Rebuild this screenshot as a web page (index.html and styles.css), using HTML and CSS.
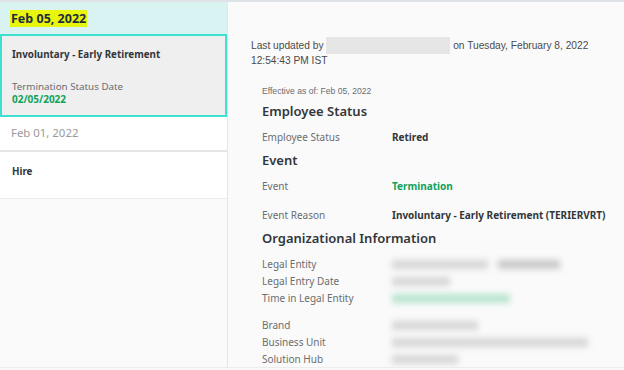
FILE: index.html
```html
<!DOCTYPE html>
<html lang="en">
<head>
<meta charset="UTF-8">
<title>Job History</title>
<link rel="stylesheet" href="styles.css">
</head>
<body>
<div class="page">
<div class="sidebar">
<div class="group-head"><span class="mark">Feb 05, 2022</span></div>
<div class="card selected">
<div class="card-title">Involuntary - Early Retirement</div>
<div class="card-label">Termination Status Date</div>
<div class="card-date">02/05/2022</div>
</div>
<div class="group-date">Feb 01, 2022</div>
<div class="card plain">
<div class="card-title">Hire</div>
</div>
</div>

<div class="main">
<p class="updated">Last updated by <span class="redact"></span> on Tuesday, February 8, 2022<br>12:54:43 PM IST</p>
<div class="details">
<p class="effective">Effective as of: Feb 05, 2022</p>

<h2>Employee Status</h2>
<div class="row"><span class="label">Employee Status</span><span class="value">Retired</span></div>

<h2 class="event-head">Event</h2>
<div class="row event-row"><span class="label">Event</span><span class="value green">Termination</span></div>
<div class="row reason-row"><span class="label">Event Reason</span><span class="value">Involuntary - Early Retirement (TERIERVRT)</span></div>

<h2 class="org-head">Organizational Information</h2>
<div class="blurred">
<div class="row tight"><span class="label">Legal Entity</span><span class="blur" style="width:96px"></span><span class="blur dark" style="width:62px"></span></div>
<div class="row tight"><span class="label">Legal Entry Date</span><span class="blur" style="width:58px"></span></div>
<div class="row tight"><span class="label">Time in Legal Entity</span><span class="blur mint" style="width:118px"></span></div>
<div class="row tight gap"><span class="label">Brand</span><span class="blur" style="width:86px"></span></div>
<div class="row tight"><span class="label">Business Unit</span><span class="blur" style="width:196px"></span></div>
<div class="row tight"><span class="label">Solution Hub</span><span class="blur" style="width:66px"></span></div>
</div>
</div>
</div>
</div>
</body>
</html>
```

FILE: styles.css
```css
body {
margin: 0;
background-color: #fafafa;
font-family: "Noto Sans", sans-serif;
color: #32363a;
}
.page {
display: flex;
height: 368px;
border-top: 2px solid #dfe3e8;
border-bottom: 1px solid #ececec;
box-sizing: border-box;
overflow: hidden;
}
.sidebar {
width: 227px;
flex-shrink: 0;
border-right: 1px solid #e6e6e6;
background-color: #fafafa;
}
.group-head {
height: 32px;
background-color: #d9f3f3;
padding-left: 10px;
display: flex;
align-items: center;
}
.mark {
background-color: #e8f50c;
font-weight: 700;
font-size: 12.5px;
line-height: 15px;
color: #1d2d3e;
padding: 1px 1px;
}
.card {
box-sizing: border-box;
background-color: #fff;
padding: 12px 12px;
}
.card.selected {
height: 83px;
background-color: #efefef;
border: 2px solid #3ee0cf;
padding: 12px 10px;
}
.card-title {
font-size: 9.8px;
font-weight: 700;
color: #32363a;
}
.card-label {
margin-top: 19px;
font-size: 9.8px;
color: #6a6d70;
line-height: 13px;
}
.card-date {
font-size: 10px;
font-weight: 700;
color: #10a35a;
line-height: 12px;
}
.group-date {
height: 35px;
box-sizing: border-box;
background-color: #fff;
padding: 8px 11px;
font-size: 11.4px;
color: #999;
border-bottom: 2px solid #e5e5e5;
}
.card.plain {
height: 47px;
padding: 13px 12px;
border-bottom: 1px solid #ececec;
}
.main {
flex: 1;
padding-left: 23px;
}
.updated {
margin: 35px 0 0;
font-family: "Liberation Sans", Arial, sans-serif;
font-size: 10.2px;
line-height: 13px;
color: #4a4a4a;
}
.redact {
display: inline-block;
width: 124px;
height: 17px;
vertical-align: -5px;
background-color: #e6e6e6;
}
.details {
padding-left: 11px;
}
.effective {
margin: 19px 0 0;
font-family: "Liberation Sans", Arial, sans-serif;
font-size: 8.6px;
color: #6a6d70;
}
h2 {
margin: 6px 0 0;
font-size: 13px;
font-weight: 600;
color: #32363a;
line-height: 19px;
}
.row {
display: flex;
align-items: center;
font-size: 10px;
height: 14px;
margin-top: 9px;
}
.label {
width: 130px;
flex-shrink: 0;
color: #6a6d70;
}
.value {
font-weight: 700;
color: #32363a;
}
.value.green {
color: #10a35a;
}
.event-head {
margin-top: 7px;
}
.event-row {
margin-top: 9px;
}
.reason-row {
margin-top: 15px;
}
.org-head {
margin-top: 7px;
}
.blurred {
margin-top: 9px;
}
.row.tight {
height: 14px;
margin-top: 3px;
}
.row.tight.gap {
margin-top: 13px;
}
.blur {
display: inline-block;
height: 9px;
margin-right: 10px;
background-color: #d6d6d6;
filter: blur(3px);
}
.blur.dark {
background-color: #c8c8c8;
}
.blur.mint {
background-color: #b7e4cf;
}
```
